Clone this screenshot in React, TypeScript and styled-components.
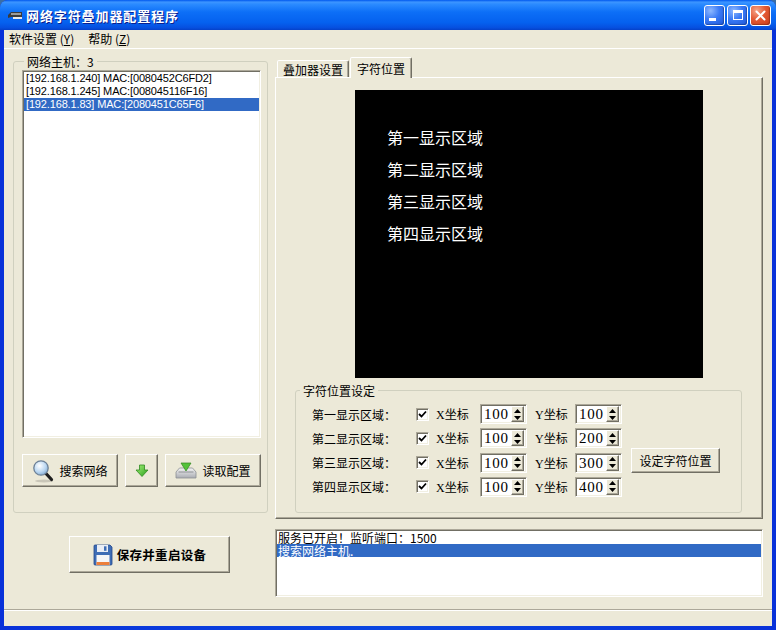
import React from 'react'
import styled, { createGlobalStyle } from 'styled-components'

const COLORS = {
  face: '#ECE9D8',
  groupLine: '#D0D0BF',
  select: '#316AC5',
  dark: '#716F64',
  shadow: '#ACA899',
  light: '#F1EFE2',
  frame: '#0A3FD6',
}

const CJK = `"Noto Sans CJK SC", "Noto Sans", sans-serif`

const GlobalStyle = createGlobalStyle`
  html, body {
    margin: 0;
    padding: 0;
    background: #3a6ea5;
  }
  body {
    font-family: ${CJK};
    font-size: 12px;
    color: #000;
  }
  * {
    box-sizing: border-box;
  }
`

const hosts = [
  '[192.168.1.240] MAC:[0080452C6FD2]',
  '[192.168.1.245] MAC:[008045116F16]',
  '[192.168.1.83] MAC:[2080451C65F6]',
]

const areas = [
  { name: '第一显示区域：', x: 100, y: 100 },
  { name: '第二显示区域：', x: 100, y: 200 },
  { name: '第三显示区域：', x: 100, y: 300 },
  { name: '第四显示区域：', x: 100, y: 400 },
]

const previewLines = ['第一显示区域', '第二显示区域', '第三显示区域', '第四显示区域']

const AppIcon = () => (
  <svg width='16' height='12' viewBox='0 0 16 12'>
    <path d='M1 6 L4 3 H15 V8 H4 L1 9 Z' fill='#3b3b3b' />
    <path d='M4 4 H14 V6 H4 Z' fill='#9a9a9a' />
    <path d='M6 8 H15 V10 H6 Z' fill='#e8e8e8' />
  </svg>
)

const SearchIcon = () => (
  <svg width='22' height='24' viewBox='0 0 22 24'>
    <defs>
      <radialGradient id='glass' cx='40%' cy='35%' r='70%'>
        <stop offset='0%' stopColor='#ffffff' />
        <stop offset='60%' stopColor='#bcd8f2' />
        <stop offset='100%' stopColor='#7ea7cf' />
      </radialGradient>
    </defs>
    <ellipse cx='12' cy='22' rx='9' ry='1.5' fill='#c9c6b8' />
    <path d='M13.5 14 L19.5 20.5' stroke='#1e1e1e' strokeWidth='3.2' strokeLinecap='round' />
    <circle cx='9' cy='9' r='7.2' fill='url(#glass)' stroke='#6d8197' strokeWidth='1.3' />
  </svg>
)

const DownArrowIcon = () => (
  <svg width='14' height='14' viewBox='0 0 14 14'>
    <defs>
      <linearGradient id='green' x1='0' y1='0' x2='1' y2='1'>
        <stop offset='0%' stopColor='#a6f07a' />
        <stop offset='100%' stopColor='#27a01a' />
      </linearGradient>
    </defs>
    <path d='M4.5 1 H9.5 V6 H13 L7 12.5 L1 6 H4.5 Z' fill='url(#green)' stroke='#2f8a1f' strokeWidth='0.8' />
  </svg>
)

const TrayIcon = () => (
  <svg width='22' height='18' viewBox='0 0 22 18'>
    <defs>
      <linearGradient id='tray' x1='0' y1='0' x2='0' y2='1'>
        <stop offset='0%' stopColor='#f4f4f4' />
        <stop offset='100%' stopColor='#a9acb2' />
      </linearGradient>
    </defs>
    <path d='M1 10 L4.5 6 H17.5 L21 10 V16 H1 Z' fill='url(#tray)' stroke='#8d9096' strokeWidth='0.8' />
    <path d='M3.5 10 H18.5' stroke='#7e8187' strokeWidth='0.8' />
    <path d='M6 1 H16 L11 9 Z' fill='#55c23a' stroke='#34861f' strokeWidth='0.7' />
  </svg>
)

const FloppyIcon = () => (
  <svg width='20' height='22' viewBox='0 0 20 22'>
    <path d='M1 2 Q1 1 2 1 H17 L19 3 V20 Q19 21 18 21 H2 Q1 21 1 20 Z' fill='#3e6db5' stroke='#23468a' strokeWidth='0.8' />
    <path d='M4 1 H15 V8 H4 Z' fill='#e9edf4' />
    <path d='M11 2.3 H13.5 V6.8 H11 Z' fill='#3e6db5' />
    <path d='M3.5 11 H16.5 V21 H3.5 Z' fill='#f6f6f6' />
    <path d='M3.5 18 H16.5 V21 H3.5 Z' fill='#ec7f3a' />
  </svg>
)

const CheckMark = () => (
  <svg width='9' height='9' viewBox='0 0 9 9'>
    <path d='M1 4 L3.5 6.5 L8 1.5' fill='none' stroke='#000' strokeWidth='1.8' />
  </svg>
)

const SpinArrows = () => (
  <svg width='7' height='11' viewBox='0 0 7 11'>
    <path d='M3.5 0 L7 4 H0 Z M0 7 H7 L3.5 11 Z' fill='#000' />
  </svg>
)

const CloseGlyph = () => (
  <svg width='11' height='11' viewBox='0 0 11 11'>
    <path d='M1.5 1.5 L9.5 9.5 M9.5 1.5 L1.5 9.5' stroke='#fff' strokeWidth='2' strokeLinecap='round' />
  </svg>
)

const Spin = ({ value }: { value: number }) => (
  <SpinBox>
    <SpinValue>{value}</SpinValue>
    <SpinButton>
      <SpinArrows />
    </SpinButton>
  </SpinBox>
)

export default function App() {
  return (
    <>
      <GlobalStyle />
      <Window>
        <TitleBar>
          <AppIcon />
          <TitleText>网络字符叠加器配置程序</TitleText>
          <CaptionButtons>
            <CaptionButton>
              <MinGlyph />
            </CaptionButton>
            <CaptionButton>
              <MaxGlyph />
            </CaptionButton>
            <CaptionButton $close>
              <CloseGlyph />
            </CaptionButton>
          </CaptionButtons>
        </TitleBar>

        <Client>
          <MenuBar>
            <MenuItem>
              软件设置 (<u>Y</u>)
            </MenuItem>
            <MenuItem>
              帮助 (<u>Z</u>)
            </MenuItem>
          </MenuBar>

          <Body>
            <LeftColumn>
              <HostGroup>
                <Legend>网络主机：3</Legend>
                <HostList>
                  {hosts.map((host, i) => (
                    <HostItem key={host} $selected={i === 2}>
                      {host}
                    </HostItem>
                  ))}
                </HostList>
                <ButtonRow>
                  <Button $width={96}>
                    <SearchIcon />
                    搜索网络
                  </Button>
                  <Button $width={33}>
                    <DownArrowIcon />
                  </Button>
                  <Button $width={96}>
                    <TrayIcon />
                    读取配置
                  </Button>
                </ButtonRow>
              </HostGroup>
              <SaveButton>
                <FloppyIcon />
                保存并重启设备
              </SaveButton>
            </LeftColumn>

            <RightColumn>
              <TabStrip>
                <Tab>叠加器设置</Tab>
                <Tab $active>字符位置</Tab>
              </TabStrip>
              <TabPanel>
                <Preview>
                  {previewLines.map((line) => (
                    <PreviewLine key={line}>{line}</PreviewLine>
                  ))}
                </Preview>
                <PosGroup>
                  <Legend $left={4}>字符位置设定</Legend>
                  <PosGrid>
                    {areas.map((area, i) => (
                      <React.Fragment key={area.name}>
                        <AreaLabel style={{ gridRow: i + 1 }}>{area.name}</AreaLabel>
                        <CheckBox style={{ gridRow: i + 1 }}>
                          <CheckMark />
                        </CheckBox>
                        <CoordLabel style={{ gridRow: i + 1 }}>X坐标</CoordLabel>
                        <SpinCell style={{ gridRow: i + 1 }}>
                          <Spin value={area.x} />
                        </SpinCell>
                        <CoordLabel style={{ gridRow: i + 1 }} $pad={8}>
                          Y坐标
                        </CoordLabel>
                        <SpinCell style={{ gridRow: i + 1 }}>
                          <Spin value={area.y} />
                        </SpinCell>
                      </React.Fragment>
                    ))}
                    <SetButton>设定字符位置</SetButton>
                  </PosGrid>
                </PosGroup>
              </TabPanel>
              <LogList>
                <LogLine>服务已开启！监听端口：1500</LogLine>
                <LogLine $selected>搜索网络主机.</LogLine>
              </LogList>
            </RightColumn>
          </Body>

          <StatusBar />
        </Client>
      </Window>
    </>
  )
}

const Window = styled.div`
  width: 776px;
  height: 630px;
  display: flex;
  flex-direction: column;
  background: linear-gradient(to right, #0831d9, #0a46e0 50%, #0831d9);
  border-radius: 8px 8px 0 0;
  overflow: hidden;
`

const TitleBar = styled.div`
  height: 30px;
  flex: none;
  display: flex;
  align-items: center;
  padding: 0 5px 0 7px;
  background: linear-gradient(
    to bottom,
    #0058ee 0%,
    #3d95ff 7%,
    #2b8bff 14%,
    #0d6ff7 40%,
    #0561ef 75%,
    #0650e0 92%,
    #0541c9 100%
  );
`

const TitleText = styled.div`
  margin-left: 3px;
  font-family: ${CJK};
  font-weight: 700;
  font-size: 13px;
  letter-spacing: 0.9px;
  color: #fff;
  text-shadow: 1px 1px 0 #0a1f8f;
`

const CaptionButtons = styled.div`
  margin-left: auto;
  display: flex;
  gap: 2px;
`

const CaptionButton = styled.div<{ $close?: boolean }>`
  width: 21px;
  height: 21px;
  border: 1px solid #fff;
  border-radius: 3px;
  display: flex;
  align-items: center;
  justify-content: center;
  background: ${(p) =>
    p.$close
      ? 'radial-gradient(circle at 30% 25%, #f6a68a 0%, #e35a34 45%, #c93a18 100%)'
      : 'radial-gradient(circle at 30% 25%, #8db8ff 0%, #3a7af5 45%, #1d55d8 100%)'};
  box-shadow: inset -1px -1px 1px rgba(0, 0, 0, 0.25);
`

const MinGlyph = styled.div`
  width: 7px;
  height: 3px;
  background: #fff;
  margin: 9px 5px 0 0;
`

const MaxGlyph = styled.div`
  width: 10px;
  height: 10px;
  border: 1px solid #fff;
  border-top-width: 3px;
`

const Client = styled.div`
  flex: 1;
  margin: 0 4px 4px;
  background: ${COLORS.face};
  display: flex;
  flex-direction: column;
`

const MenuBar = styled.div`
  height: 19px;
  flex: none;
  display: flex;
  align-items: center;
  border-bottom: 1px solid #fff;
`

const MenuItem = styled.div`
  padding: 0 5px;
  margin-right: 4px;
  font-size: 12px;
  line-height: 18px;
`

const Body = styled.div`
  height: 560px;
  flex: none;
  display: flex;
  padding: 8px 0 0 9px;
`

const LeftColumn = styled.div`
  width: 255px;
  padding-top: 4px;
  display: flex;
  flex-direction: column;
`

const GroupFrame = styled.div`
  position: relative;
  border: 1px solid ${COLORS.groupLine};
  border-radius: 3px;
`

const HostGroup = styled(GroupFrame)`
  height: 452px;
  padding: 8px 0 0 8px;
`

const Legend = styled.span<{ $left?: number }>`
  position: absolute;
  top: -8px;
  left: ${(p) => p.$left ?? 10}px;
  padding: 0 3px;
  background: ${COLORS.face};
  font-size: 12px;
  line-height: 15px;
`

const sunken = `
  border: 1px solid;
  border-color: ${COLORS.shadow} #fff #fff ${COLORS.shadow};
  box-shadow: inset 1px 1px 0 ${COLORS.dark}, inset -1px -1px 0 ${COLORS.light};
  background: #fff;
`

const HostList = styled.div`
  ${sunken}
  width: 239px;
  height: 368px;
  padding: 1px 1px;
`

const HostItem = styled.div<{ $selected?: boolean }>`
  height: 13px;
  line-height: 13px;
  padding-left: 2px;
  font-family: 'Liberation Sans', 'DejaVu Sans', sans-serif;
  font-size: 11px;
  letter-spacing: -0.15px;
  white-space: nowrap;
  background: ${(p) => (p.$selected ? COLORS.select : 'transparent')};
  color: ${(p) => (p.$selected ? '#fff' : '#000')};
`

const ButtonRow = styled.div`
  display: flex;
  gap: 7px;
  margin-top: 16px;
`

const raised = `
  border: 1px solid;
  border-color: #fff ${COLORS.dark} ${COLORS.dark} #fff;
  box-shadow: inset -1px -1px 0 ${COLORS.shadow};
  background: ${COLORS.face};
`

const Button = styled.div<{ $width: number }>`
  ${raised}
  width: ${(p) => p.$width}px;
  height: 33px;
  display: flex;
  align-items: center;
  justify-content: center;
  gap: 5px;
  font-size: 12px;
`

const SaveButton = styled.div`
  ${raised}
  width: 161px;
  height: 37px;
  margin: 23px 0 0 56px;
  display: flex;
  align-items: center;
  justify-content: center;
  gap: 4px;
  font-size: 12.5px;
  font-weight: 700;
  letter-spacing: 0.3px;
`

const RightColumn = styled.div`
  width: 488px;
  margin-left: 7px;
  display: flex;
  flex-direction: column;
`

const TabStrip = styled.div`
  height: 20px;
  display: flex;
  align-items: flex-end;
  padding-left: 2px;
  gap: 1px;
  position: relative;
  z-index: 1;
`

const Tab = styled.div<{ $active?: boolean }>`
  height: ${(p) => (p.$active ? 21 : 17)}px;
  margin-bottom: ${(p) => (p.$active ? -1 : 0)}px;
  padding: 0 ${(p) => (p.$active ? 6 : 5)}px;
  display: flex;
  align-items: center;
  font-size: 12px;
  background: ${COLORS.face};
  border: 1px solid;
  border-bottom: none;
  border-color: #fff ${COLORS.dark} transparent #fff;
  border-radius: 2px 2px 0 0;
  box-shadow: inset -1px 0 0 ${COLORS.shadow};
`

const TabPanel = styled.div`
  height: 442px;
  border: 1px solid;
  border-color: #fff ${COLORS.dark} ${COLORS.dark} #fff;
  box-shadow: inset -1px -1px 0 ${COLORS.shadow};
  padding: 12px 0 0 19px;
`

const Preview = styled.div`
  width: 348px;
  height: 288px;
  margin-left: 60px;
  background: #000;
  padding: 31px 0 0 32px;
`

const PreviewLine = styled.div`
  height: 32px;
  line-height: 32px;
  font-size: 16px;
  color: #fff;
`

const PosGroup = styled(GroupFrame)`
  width: 447px;
  height: 123px;
  margin-top: 12px;
  padding: 13px 0 0 16px;
`

const PosGrid = styled.div`
  display: grid;
  grid-template-columns: 104px 13px 51px 47px 48px 48px 89px;
  grid-auto-rows: 20px;
  row-gap: 4.3px;
`

const AreaLabel = styled.div`
  grid-column: 1;
  display: flex;
  align-items: center;
  font-size: 12px;
`

const CheckBox = styled.div`
  grid-column: 2;
  align-self: center;
  width: 13px;
  height: 13px;
  ${sunken}
  display: flex;
  align-items: center;
  justify-content: center;
`

const CoordLabel = styled.div<{ $pad?: number }>`
  display: flex;
  align-items: center;
  padding-left: ${(p) => p.$pad ?? 7}px;
  font-family: 'Liberation Serif', ${CJK};
  font-size: 12px;
`

const SpinCell = styled.div`
  display: flex;
  align-items: center;
`

const SpinBox = styled.div`
  ${sunken}
  width: 47px;
  height: 20px;
  display: flex;
  align-items: center;
  padding: 0 2px 0 3px;
`

const SpinValue = styled.span`
  flex: 1;
  font-family: 'Liberation Serif', serif;
  font-size: 15px;
  letter-spacing: 0.8px;
  line-height: 16px;
`

const SpinButton = styled.div`
  ${raised}
  width: 13px;
  height: 16px;
  display: flex;
  align-items: center;
  justify-content: center;
`

const SetButton = styled.div`
  ${raised}
  grid-column: 7;
  grid-row: 2 / 4;
  align-self: end;
  margin-left: 8px;
  width: 89px;
  height: 25px;
  display: flex;
  align-items: center;
  justify-content: center;
  font-size: 12px;
`

const LogList = styled.div`
  ${sunken}
  width: 488px;
  height: 68px;
  margin-top: 10px;
  padding: 1px;
`

const LogLine = styled.div<{ $selected?: boolean }>`
  height: 13px;
  line-height: 13px;
  padding-left: 1px;
  font-size: 12px;
  white-space: nowrap;
  background: ${(p) => (p.$selected ? COLORS.select : 'transparent')};
  color: ${(p) => (p.$selected ? '#fff' : '#000')};
`

const StatusBar = styled.div`
  flex: 1;
  border-top: 1px solid ${COLORS.shadow};
  box-shadow: inset 0 1px 0 #fff;
`
